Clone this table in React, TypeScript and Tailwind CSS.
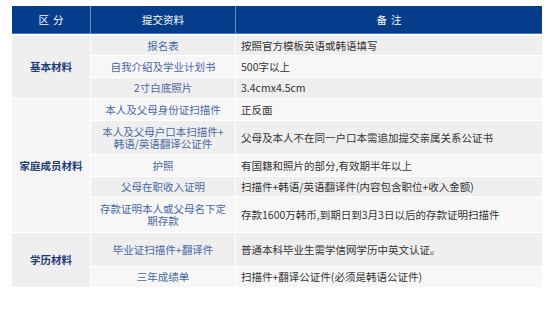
const groups = [
  {
    name: '基本材料',
    rows: [
      { item: '报名表', note: '按照官方模板英语或韩语填写', h: 'h-[19px]' },
      { item: '自我介绍及学业计划书', note: '500字以上', h: 'h-[21px]' },
      { item: '2寸白底照片', note: '3.4cmx4.5cm', h: 'h-[20px]' },
    ],
  },
  {
    name: '家庭成员材料',
    rows: [
      { item: '本人及父母身份证扫描件', note: '正反面', h: 'h-[21px]' },
      { item: '本人及父母户口本扫描件+\n韩语/英语翻译公证件', note: '父母及本人不在同一户口本需追加提交亲属关系公证书', h: 'h-[33px]' },
      { item: '护照', note: '有国籍和照片的部分,有效期半年以上', h: 'h-[21px]' },
      { item: '父母在职收入证明', note: '扫描件+韩语/英语翻译件(内容包含职位+收入金额)', h: 'h-[19px]' },
      { item: '存款证明本人或父母名下定\n期存款', note: '存款1600万韩币,到期日到3月3日以后的存款证明扫描件', h: 'h-[35px]' },
    ],
  },
  {
    name: '学历材料',
    rows: [
      { item: '毕业证扫描件+翻译件', note: '普通本科毕业生需学信网学历中英文认证。', h: 'h-[33px]' },
      { item: '三年成绩单', note: '扫描件+翻译公证件(必须是韩语公证件)', h: 'h-[20px]' },
    ],
  },
];

export default function App() {
  let idx = 0;
  return (
    <div className="w-[554px] h-[309px] bg-white pt-[6px] pl-[12px] font-['Noto_Sans_CJK_SC','Noto_Sans',sans-serif] text-[10.5px]">
      <div className="w-[530px]">
        <div className="grid grid-cols-[78px_144px_306px] gap-px bg-[#6f8fc4] h-[28px] border-b border-[#4f76b8]">
          <div className="bg-[#053d8c] text-white flex items-center justify-center tracking-[4px] pl-[4px]">区分</div>
          <div className="bg-[#053d8c] text-white flex items-center justify-center">提交资料</div>
          <div className="bg-[#053d8c] text-white flex items-center justify-center tracking-[4px] pl-[4px]">备注</div>
        </div>
        <div className="mt-[2px] flex flex-col gap-px">
          {groups.map((g, gi) => (
            <div key={g.name} className="grid grid-cols-[78px_451px] gap-px">
              <div className={`flex items-center justify-center font-bold text-[#1d3c78] ${gi === 1 ? 'bg-[#f6f6f6]' : 'bg-[#efefef]'}`}>
                {g.name}
              </div>
              <div className="flex flex-col gap-px">
                {g.rows.map((r) => {
                  const even = idx++ % 2 === 0;
                  const bg = even ? 'bg-[#efefef]' : 'bg-[#f7f7f7]';
                  return (
                    <div key={r.item} className={`grid grid-cols-[144px_306px] gap-px ${r.h}`}>
                      <div className={`${bg} flex items-center justify-center text-center whitespace-pre-line leading-[12px] text-[#4a67a3]`}>
                        {r.item}
                      </div>
                      <div className={`${bg} flex items-center pl-[5px] text-[#333333] whitespace-nowrap`}>{r.note}</div>
                    </div>
                  );
                })}
              </div>
            </div>
          ))}
        </div>
      </div>
    </div>
  );
}
